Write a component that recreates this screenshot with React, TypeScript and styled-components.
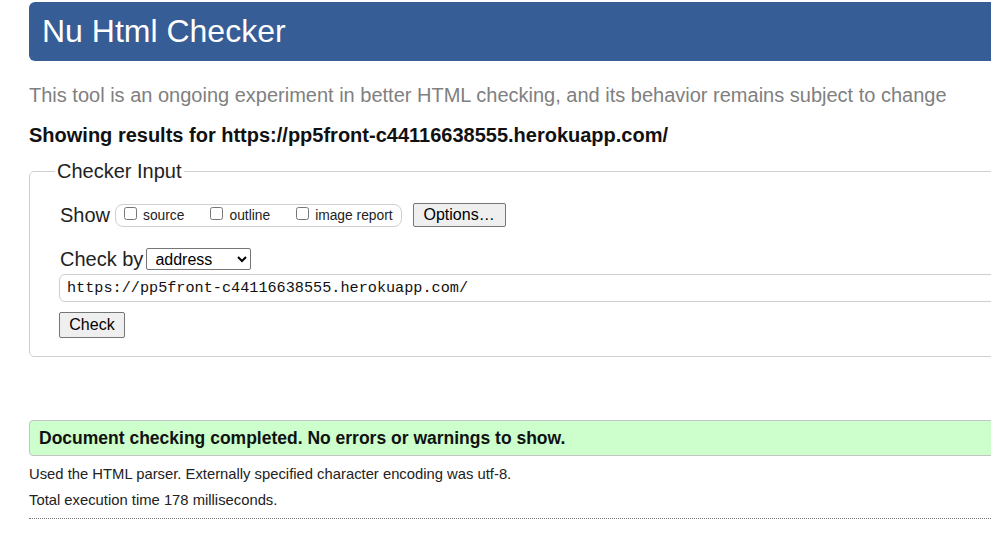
import React from "react";
import styled, { createGlobalStyle } from "styled-components";

const GlobalStyle = createGlobalStyle`
  html, body {
    margin: 0;
    padding: 0;
    background: #fff;
    overflow: hidden;
  }
  body {
    font-family: "Liberation Sans", Arial, sans-serif;
    color: #000;
  }
`;

const Page = styled.div`
  width: 1300px;
  padding: 2px 0 0 29px;
`;

const Header = styled.h1`
  margin: 0;
  height: 59px;
  line-height: 59px;
  padding-left: 13px;
  background: #365d95;
  color: #fff;
  font-size: 32px;
  font-weight: 400;
  border-radius: 6px;
`;

const Intro = styled.p`
  margin: 22px 0 0;
  font-size: 20px;
  line-height: 24px;
  color: #808080;
`;

const Results = styled.p`
  margin: 16px 0 0;
  font-size: 20px;
  line-height: 24px;
  font-weight: 700;
  color: #111;
`;

const Fieldset = styled.fieldset`
  margin: 12px 0 0;
  padding: 20px 0 18px 30px;
  border: 1px solid #cfcfcf;
  border-radius: 5px;
  min-width: 0;
`;

const Legend = styled.legend`
  font-size: 20px;
  line-height: 24px;
  padding: 0 2px;
  margin-left: -5px;
  color: #222;
`;

const Row = styled.div<{ $mt?: number }>`
  display: flex;
  align-items: center;
  margin-top: ${(p) => p.$mt ?? 0}px;
`;

const RowLabel = styled.span`
  font-size: 20px;
  line-height: 24px;
  color: #222;
`;

const ToggleGroup = styled.div`
  display: flex;
  align-items: center;
  height: 21px;
  padding: 0 8px 0 5px;
  border: 1px solid #cfcfcf;
  border-radius: 8px;
  margin-left: 5px;
`;

const Toggle = styled.label<{ $space?: number }>`
  display: flex;
  align-items: center;
  font-size: 13.8px;
  color: #222;
  margin-left: ${(p) => p.$space ?? 0}px;
`;

const Box = styled.input`
  width: 13px;
  height: 13px;
  margin: 0 6px 4px 3px;
`;

const Button = styled.button<{ $w: number; $h: number }>`
  width: ${(p) => p.$w}px;
  height: ${(p) => p.$h}px;
  font-family: "Liberation Sans", Arial, sans-serif;
  font-size: 16px;
  color: #000;
  background: #efefef;
  border: 1px solid #767676;
  border-radius: 2px;
  padding: 0;
`;

const OptionsButton = styled(Button)`
  margin-left: 11px;
`;

const Select = styled.select`
  width: 105px;
  height: 22px;
  margin-left: 3px;
  font-family: "Liberation Sans", Arial, sans-serif;
  font-size: 16px;
  color: #000;
  border: 1px solid #767676;
  border-radius: 2px;
  background: #fff;
  padding: 0 0 0 4px;
`;

const UrlInput = styled.input`
  display: block;
  box-sizing: border-box;
  width: calc(100% + 1px);
  height: 28px;
  margin: 3px 0 0 -1px;
  padding: 0 7px;
  border: 1px solid #cfcfcf;
  border-radius: 6px;
  font-family: "Liberation Mono", "DejaVu Sans Mono", monospace;
  font-size: 15.2px;
  color: #111;
  background: #fff;
`;

const CheckRow = styled.div`
  margin: 10px 0 0 -1px;
`;

const Success = styled.p`
  margin: 63px 0 0;
  height: 34px;
  line-height: 34px;
  padding-left: 9px;
  background: #ccffcc;
  border: 1px solid #c4c4c4;
  border-radius: 4px;
  font-size: 17.5px;
  font-weight: 700;
  color: #111;
`;

const Note = styled.p<{ $mt: number }>`
  margin: ${(p) => p.$mt}px 0 0;
  font-size: 14.8px;
  line-height: 18px;
  color: #222;
`;

const Rule = styled.hr`
  margin: 9px 0 0;
  border: 0;
  border-top: 1px dotted #777;
`;

export default function App() {
  return (
    <Page>
      <GlobalStyle />
      <Header>Nu Html Checker</Header>
      <Intro>
        This tool is an ongoing experiment in better HTML checking, and its behavior remains subject to change
      </Intro>
      <Results>Showing results for https://pp5front-c44116638555.herokuapp.com/</Results>

      <Fieldset>
        <Legend>Checker Input</Legend>
        <Row>
          <RowLabel>Show</RowLabel>
          <ToggleGroup>
            <Toggle>
              <Box type="checkbox" />
              source
            </Toggle>
            <Toggle $space={23}>
              <Box type="checkbox" />
              outline
            </Toggle>
            <Toggle $space={23}>
              <Box type="checkbox" />
              image report
            </Toggle>
          </ToggleGroup>
          <OptionsButton $w={93} $h={24}>Options…</OptionsButton>
        </Row>
        <Row $mt={20}>
          <RowLabel>Check by</RowLabel>
          <Select defaultValue="address">
            <option value="address">address</option>
            <option value="upload">file upload</option>
            <option value="text">text input</option>
          </Select>
        </Row>
        <UrlInput type="url" defaultValue="https://pp5front-c44116638555.herokuapp.com/" />
        <CheckRow>
          <Button $w={66} $h={26}>Check</Button>
        </CheckRow>
      </Fieldset>

      <Success>Document checking completed. No errors or warnings to show.</Success>
      <Note $mt={9}>Used the HTML parser. Externally specified character encoding was utf-8.</Note>
      <Note $mt={8}>Total execution time 178 milliseconds.</Note>
      <Rule />
    </Page>
  );
}
